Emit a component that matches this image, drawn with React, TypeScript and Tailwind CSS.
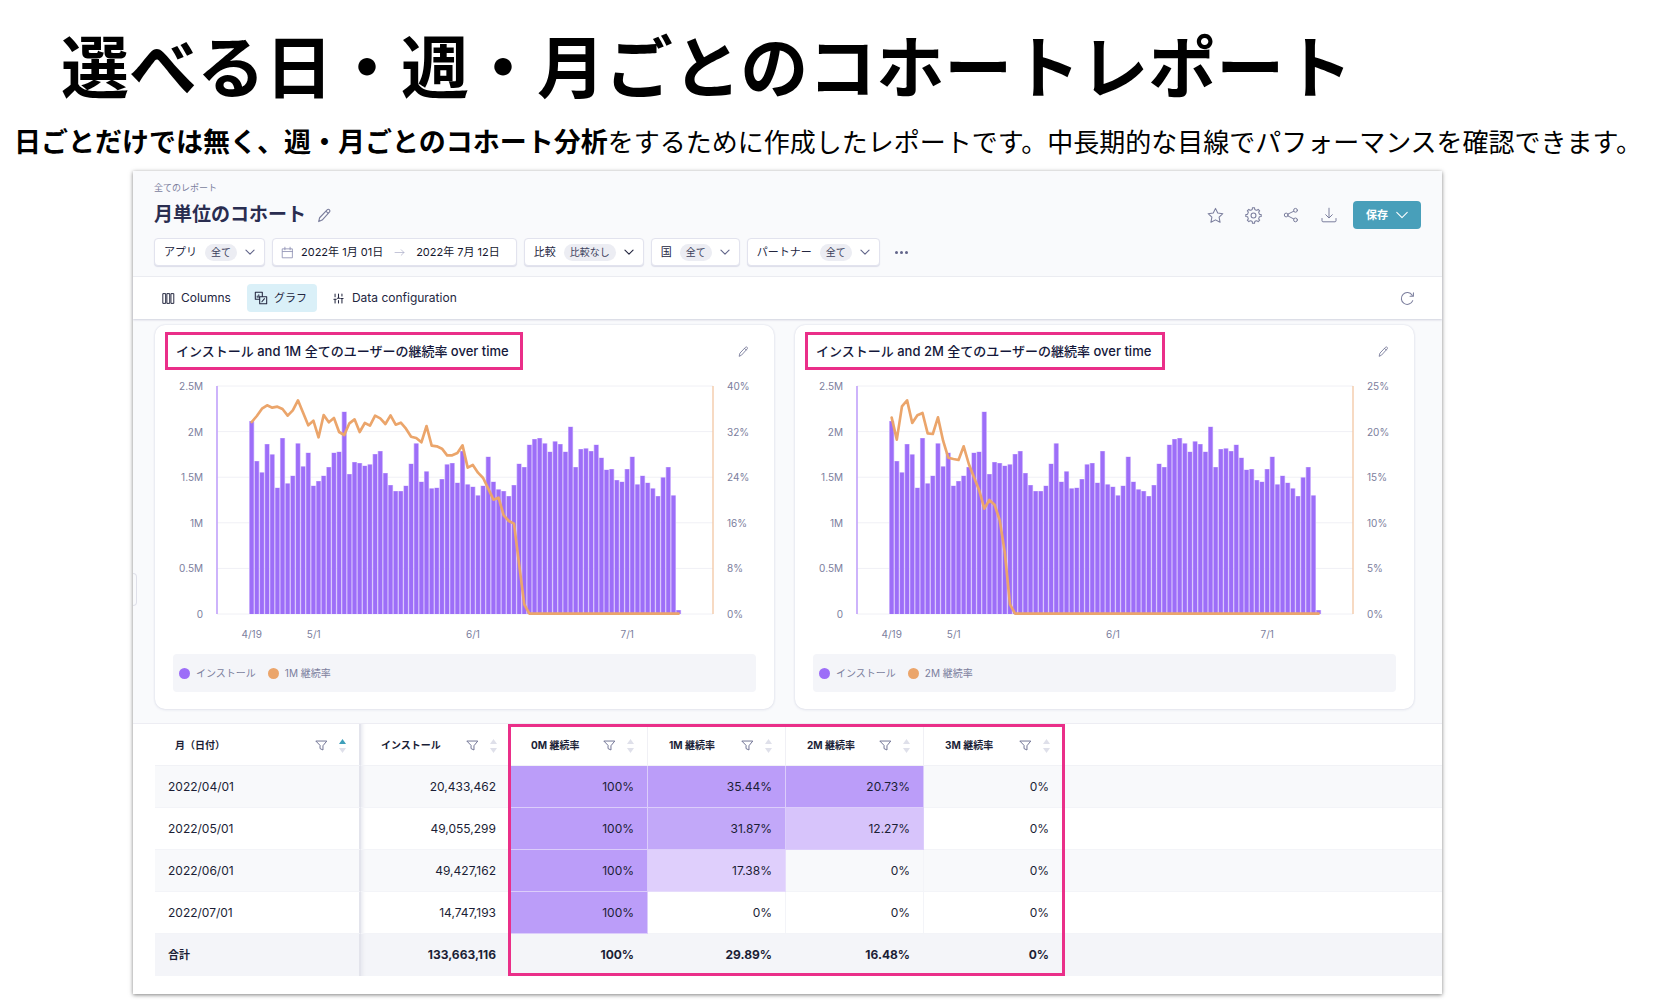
import type { ReactNode } from "react";

const PLOT_HEIGHT = 684;

const barTops = [
  306, 426, 460, 375, 406, 506, 357, 493, 470, 373, 442, 401, 500, 486, 470, 444, 401, 398, 278, 465, 429,
  432, 440, 436, 405, 396, 462, 498, 516, 516, 500, 434, 373, 488, 457, 508, 506, 480, 436, 432, 491, 396,
  496, 503, 529, 500, 413, 488, 511, 516, 531, 498, 434, 444, 377, 360, 357, 373, 398, 367, 375, 398, 323,
  444, 390, 388, 396, 377, 416, 452, 450, 483, 488, 450, 413, 496, 470, 491, 508, 531, 475, 444, 529, 873,
].map((y) => y - 200);

const firstMonthLine = [
  308, 290, 268, 258, 265, 262, 269, 289, 273, 243, 280, 318, 304, 354, 287, 309, 296, 338, 347, 312, 300,
  338, 311, 319, 289, 297, 314, 288, 316, 310, 328, 352, 356, 369, 320, 379, 381, 388, 408, 408, 401, 378,
  445, 437, 460, 476, 508, 541, 535, 588, 605, 613, 735, 855,
].map((y) => y - 200);

const secondMonthLine = [
  295, 361, 261, 243, 311, 288, 281, 342, 344, 294, 364, 415, 419, 422, 381, 434, 474, 512, 568, 542, 556,
  602, 700, 855,
].map((y) => y - 200);

const barX = (i: number) => 104 + i * 15.43;

function Svg({ size, children, className = "" }: { size: number; children: ReactNode; className?: string }) {
  return (
    <svg
      width={size}
      height={size}
      viewBox="0 0 16 16"
      fill="none"
      stroke="currentColor"
      strokeWidth="1"
      strokeLinecap="round"
      strokeLinejoin="round"
      aria-hidden="true"
      className={`shrink-0 ${className}`}
    >
      {children}
    </svg>
  );
}

const Chevron = ({ className = "" }: { className?: string }) => (
  <Svg size={10} className={className}>
    <path d="M1.5 5 8 11.5 14.5 5" strokeWidth="1.8" />
  </Svg>
);

const Pencil = ({ size }: { size: number }) => (
  <Svg size={size}>
    <path d="M1.8 14.5 2.8 10.4 10.8 2c.8-.8 1.800-.8 2.500-.1s.7 1.700-.1 2.500L5.500 12.900zM9.500 3.400 11.900 5.800" strokeWidth="1.200" />
  </Svg>
);

const Star = () => (
  <Svg size={17}>
    <path d="M8 1.300 10.100 5.700 14.900 6.300 11.400 9.600 12.300 14.400 8 12.100 3.700 14.400 4.600 9.600 1.100 6.300 5.900 5.700z" />
  </Svg>
);

const gearPath = (() => {
  let d = "";
  for (let i = 0; i < 8; i++) {
    const at = (deg: number, r: number) => {
      const a = ((i * 45 + deg - 90) * Math.PI) / 180;
      return `${(8 + r * Math.cos(a)).toFixed(2)} ${(8 + r * Math.sin(a)).toFixed(2)}`;
    };
    d += `${i === 0 ? "M" : "L"}${at(-8, 7.3)} L${at(8, 7.3)} Q${at(10, 5.2)} ${at(22.5, 5.7)} Q${at(35, 5.2)} ${at(37, 7.3)} `;
  }
  return d + "Z";
})();

const Gear = () => (
  <Svg size={17}>
    <path d={gearPath} />
    <circle cx="8" cy="8" r="2.300" />
  </Svg>
);

const Share = () => (
  <Svg size={16}>
    <circle cx="3.200" cy="8" r="1.900" />
    <circle cx="12.500" cy="3.300" r="1.900" />
    <circle cx="12.500" cy="12.900" r="1.900" />
    <path d="M4.900 7.100 10.800 4.200M4.900 8.900 10.800 12" />
  </Svg>
);

const Download = () => (
  <Svg size={16}>
    <path d="M8 1.200v9.500M4.700 7.700 8 11l3.300-3.300M1 11.500v2.300c0 .6.400 1 1 1h12c.6 0 1-.4 1-1v-2.300" />
  </Svg>
);

const Refresh = () => (
  <Svg size={15}>
    <path d="M13.600 10.300A6.300 6.300 0 1 1 13 4.500M14.300 2v3.600h-3.600" strokeWidth="1.100" />
  </Svg>
);

const Calendar = () => (
  <Svg size={13}>
    <path d="M2 3.500h12v11H2zM2 6.800h12M4.800 1.500v3.200M11.200 1.500v3.200" />
  </Svg>
);

const Arrow = () => (
  <Svg size={11}>
    <path d="M1.500 8h13M10.500 4l4 4-4 4" />
  </Svg>
);

const ColumnsIcon = () => (
  <Svg size={13}>
    <path d="M1.500 2h3v12h-3zM6.500 2h3v12h-3zM11.500 2h3v12h-3z" strokeWidth="1.200" />
  </Svg>
);

const GraphIcon = () => (
  <Svg size={14}>
    <path d="M6.500 9.500H1.500V1.500H9.500V6.500M6.500 6.500h8v8h-8zM3.700 7.200v-1.500M5.500 7.200v-3M9 12.300l3-3.500" strokeWidth="1.200" />
  </Svg>
);

const SlidersIcon = () => (
  <Svg size={11}>
    <path d="M3 1.500v4M3 9v5.500M8 1.500v6M8 11v3.500M13 1.500v3M13 8v6.500M1.300 9h3.400M6.300 7.500h3.400M11.300 8h3.400" strokeWidth="1.500" />
  </Svg>
);

const FunnelIcon = () => (
  <Svg size={13} className="text-[#6f7293]">
    <path d="M1.500 2.500h13L9.800 8.300v5.200l-3.600-1.700V8.300z" strokeWidth="1.200" />
  </Svg>
);

function SortIcon({ ascending = false }: { ascending?: boolean }) {
  return (
    <svg width="7" height="14" viewBox="0 0 7 14" className="shrink-0" aria-hidden="true">
      <path d="M3.500 0 7 5H0z" fill={ascending ? "#3f9fba" : "#dfe0ea"} />
      <path d="M3.500 14 7 9H0z" fill="#dfe0ea" />
    </svg>
  );
}

function Filter({ label, value, strong = false }: { label: string; value: string; strong?: boolean }) {
  return (
    <button
      type="button"
      className="flex h-7 items-center gap-2 rounded border border-[#e2e3ee] bg-white px-[9px] text-[11px] text-[#23263f] shadow-[0_1px_1px_#dcdde9]"
    >
      <span>{label}</span>
      <span className="flex h-[17px] items-center rounded-full bg-[#ecedf3] px-[6px] text-[10px] text-[#3c3f5c]">{value}</span>
      <Chevron className={strong ? "text-[#23263f]" : "text-[#62658a]"} />
    </button>
  );
}

function IconButton({ label, children }: { label: string; children: ReactNode }) {
  return (
    <button type="button" aria-label={label} className="flex w-[18px] justify-center text-[#7b7e9d]">
      {children}
    </button>
  );
}

type ChartProps = { month: string; percents: string[]; line: number[] };

const counts = ["2.5M", "2M", "1.5M", "1M", "0.5M", "0"];
const dates = [
  { label: "4/19", left: "7%" },
  { label: "5/1", left: "19.5%" },
  { label: "6/1", left: "51.6%" },
  { label: "7/1", left: "82.7%" },
];

function AxisLabels({ labels, className }: { labels: string[]; className: string }) {
  return (
    <div className={`flex h-60 flex-col justify-between text-[10px] leading-3 ${className}`}>
      {labels.map((t) => (
        <span key={t}>{t}</span>
      ))}
    </div>
  );
}

function ChartCard({ month, percents, line }: ChartProps) {
  const full = [...line, ...Array(barTops.length - line.length).fill(PLOT_HEIGHT - 1)];
  const points = full.map((y, i) => `${barX(i)},${y}`).join(" ");
  return (
    <article className="min-w-0 flex-1 rounded-[10px] bg-white pt-[7px] pb-[17px] shadow-[0_0_2px_#d5d7e3,0_1px_3px_#e9eaf1]">
      <header className="flex items-center justify-between pr-[25px] pl-[10px]">
        <h2 className="border-[3px] border-[#ea2f89] py-[6px] pr-[11px] pl-2 text-[13px] leading-5 font-medium text-[#14173a]">
          インストール and {month} 全てのユーザーの継続率 over time
        </h2>
        <button type="button" aria-label="グラフを編集" className="text-[#6f7293]">
          <Pencil size={11} />
        </button>
      </header>
      <div className="mt-[10px] flex text-[#7b7e9d]">
        <AxisLabels labels={counts} className="mr-[14px] w-12 items-end" />
        <div className="min-w-0 flex-1 pt-[6px]">
          <svg
            viewBox="0 0 1488 684"
            preserveAspectRatio="none"
            className="block h-[228px] w-full overflow-visible"
            role="img"
            aria-label={`インストールと${month}継続率`}
          >
            {[0, 1, 2, 3, 4, 5].map((i) => (
              <line key={i} x1="0" x2="1488" y1={i * 136.8} y2={i * 136.8} stroke="#f0f0f5" strokeWidth="3" />
            ))}
            {barTops.map((y, i) => (
              <rect key={i} x={barX(i) - 7.7} y={y - 1} width="15.4" height={PLOT_HEIGHT - y + 1} fill="#cfb7fc" />
            ))}
            {barTops.map((y, i) => (
              <rect key={i} x={barX(i) - 5.7} y={y} width="11.4" height={PLOT_HEIGHT - y} fill="#9d6ef8" />
            ))}
            <line x1="0" x2="0" y1="0" y2="684" stroke="#c3a5fb" strokeWidth="5" />
            <line x1="1488" x2="1488" y1="0" y2="684" stroke="#f3c8a5" strokeWidth="4" />
            <polyline points={points} fill="none" stroke="#eba56b" strokeWidth="8" strokeLinejoin="round" strokeLinecap="round" />
          </svg>
          <div className="relative mt-[14px] h-3 text-[10px] leading-3">
            {dates.map((d) => (
              <span key={d.label} className="absolute -translate-x-1/2" style={{ left: d.left }}>
                {d.label}
              </span>
            ))}
          </div>
        </div>
        <AxisLabels labels={percents} className="ml-[14px] w-[47px] items-start" />
      </div>
      <div className="mx-[18px] mt-[14px] flex h-[38px] items-center rounded bg-[#f4f5f9] px-[6px] text-[10px] text-[#7b7e9d]">
        <span className="mr-[6px] size-[11px] rounded-full bg-[#9d6ef8]" />
        インストール
        <span className="mr-[6px] ml-3 size-[11px] rounded-full bg-[#eba56b]" />
        {month} 継続率
      </div>
    </article>
  );
}

const headers = ["月（日付）", "インストール", "0M 継続率", "1M 継続率", "2M 継続率", "3M 継続率"];

const headerStyles = [
  "border-r-2 border-r-[#e3e4ec] pl-5",
  "pl-5 shadow-[inset_5px_0_4px_-4px_#e3e4ec]",
  "border-r border-r-[#f0f0f5] pl-[21px]",
  "border-r border-r-[#f0f0f5] pl-[21px]",
  "border-r border-r-[#f0f0f5] pl-[21px]",
  "pl-[21px]",
];

const rows = [
  { date: "2022/04/01", cells: ["20,433,462", "100%", "35.44%", "20.73%", "0%"] },
  { date: "2022/05/01", cells: ["49,055,299", "100%", "31.87%", "12.27%", "0%"] },
  { date: "2022/06/01", cells: ["49,427,162", "100%", "17.38%", "0%", "0%"] },
  { date: "2022/07/01", cells: ["14,747,193", "100%", "0%", "0%", "0%"] },
];

const heat: Record<string, string> = {
  "100%": "bg-[#bb9df9] border-[#dccdfb]",
  "35.44%": "bg-[#bb9df9] border-[#dccdfb]",
  "20.73%": "bg-[#bb9df9] border-[#dccdfb]",
  "31.87%": "bg-[#c2a8f9] border-[#dccdfb]",
  "12.27%": "bg-[#d7c4fb] border-[#dccdfb]",
  "17.38%": "bg-[#dfcffc] border-[#e6dbfc]",
};

function CohortTable() {
  return (
    <section className="border-t border-[#ededf3] bg-white pb-[18px] pl-[22px]">
      <div className="relative">
        <table className="w-full table-fixed border-separate border-spacing-0 text-[12px] text-[#1b1e36]">
          <colgroup>
            <col className="w-[206px]" />
            <col className="w-[149px]" />
            <col className="w-[138px]" />
            <col className="w-[138px]" />
            <col className="w-[138px]" />
            <col className="w-[139px]" />
            <col />
          </colgroup>
          <thead>
            <tr className="h-[42px]">
              {headers.map((h, i) => (
                <th key={h} scope="col" className={`border-b border-b-[#f1f2f6] p-0 pt-[2px] text-[10px] font-bold ${headerStyles[i]}`}>
                  <span className="flex items-center pr-[13px]">
                    <span className="mr-auto">{h}</span>
                    <button type="button" aria-label={`${h}を絞り込む`} className="mr-[11px]">
                      <FunnelIcon />
                    </button>
                    <button type="button" aria-label={`${h}で並べ替え`}>
                      <SortIcon ascending={i === 0} />
                    </button>
                  </span>
                </th>
              ))}
              <td className="border-b border-b-[#f1f2f6]" />
            </tr>
          </thead>
          <tbody>
            {rows.map((r) => (
              <tr key={r.date} className="h-[42px] odd:bg-[#f8f9fb]">
                <th scope="row" className="border-r-2 border-b border-r-[#e3e4ec] border-b-[#f3f4f8] p-0 pl-[13px] text-left font-normal">
                  {r.date}
                </th>
                {r.cells.map((c, i) => (
                  <td
                    key={i}
                    className={`border-b p-0 text-right ${heat[c] ?? "border-[#f3f4f8]"} ${
                      i === 0 ? "pr-[14px] shadow-[inset_5px_0_4px_-4px_#e3e4ec]" : i < 4 ? "border-r pr-[13px]" : "pr-[14px]"
                    }`}
                  >
                    {c}
                  </td>
                ))}
                <td className="border-b border-[#f3f4f8]" />
              </tr>
            ))}
          </tbody>
          <tfoot>
            <tr className="h-[42px] bg-[#f4f5f9] font-bold">
              <th scope="row" className="border-r-2 border-r-[#e3e4ec] p-0 pl-[13px] text-left text-[11px]">
                合計
              </th>
              {["133,663,116", "100%", "29.89%", "16.48%", "0%"].map((c, i) => (
                <td key={i} className={`p-0 pr-[14px] text-right ${i === 0 ? "shadow-[inset_5px_0_4px_-4px_#e3e4ec]" : ""}`}>
                  {c}
                </td>
              ))}
              <td />
            </tr>
          </tfoot>
        </table>
        <div className="pointer-events-none absolute inset-y-0 left-[353px] w-[557px] border-[3px] border-[#ea2f89]" />
      </div>
    </section>
  );
}

export default function App() {
  return (
    <main className="min-h-screen overflow-hidden bg-white pb-[5px] font-['Inter','Noto_Sans_CJK_JP',sans-serif] text-black">
      <h1 className="mt-3 ml-[61px] font-['Noto_Sans_CJK_JP',sans-serif] text-[68px] leading-[104px] font-bold whitespace-nowrap">
        選べる日・週・月ごとのコホートレポート
      </h1>
      <p className="mt-1 ml-[14px] font-['Noto_Sans_CJK_JP',sans-serif] text-[26px] leading-[42px] whitespace-nowrap">
        <strong className="text-[27px] font-bold">日ごとだけでは無く、週・月ごとのコホート分析</strong>
        をするために作成したレポートです。中長期的な目線でパフォーマンスを確認できます。
      </p>

      <div className="relative mt-[9px] mr-[218px] ml-[133px] bg-[#f9fafc] shadow-[0_1px_4px_rgba(0,0,0,0.5)]">
        <header className="border-b border-[#edeef3] px-[21px] pt-[9px] pb-[10px]">
          <a href="#reports" className="block text-[9px] leading-4 text-[#7b7e9d]">
            全てのレポート
          </a>
          <div className="mt-[3px] flex items-center">
            <h2 className="text-[19px] leading-8 font-bold text-[#2a2d50]">月単位のコホート</h2>
            <button type="button" aria-label="名前を編集" className="ml-[11px] text-[#7b7e9d]">
              <Pencil size={15} />
            </button>
            <div className="ml-auto flex items-center gap-5">
              <IconButton label="お気に入り"><Star /></IconButton>
              <IconButton label="設定"><Gear /></IconButton>
              <IconButton label="共有"><Share /></IconButton>
              <IconButton label="ダウンロード"><Download /></IconButton>
            </div>
            <button type="button" className="ml-[15px] flex h-7 w-[68px] items-center justify-center gap-2 rounded bg-[#489fba] text-[11px] font-bold text-white">
              保存
              <Svg size={12}>
                <path d="M1 4.500 8 11.500 15 4.500" strokeWidth="1.400" />
              </Svg>
            </button>
          </div>
          <div className="mt-[7px] flex items-center gap-[7px]">
            <Filter label="アプリ" value="全て" />
            <button
              type="button"
              className="flex h-7 items-center rounded border border-[#e2e3ee] bg-white pr-4 pl-2 text-[11px] text-[#14172e] shadow-[0_1px_1px_#dcdde9]"
            >
              <span className="mr-[7px] text-[#8a8db0]"><Calendar /></span>
              2022年 1月 01日
              <span className="mx-[11px] text-[#a9abc6]"><Arrow /></span>
              2022年 7月 12日
            </button>
            <Filter label="比較" value="比較なし" strong />
            <Filter label="国" value="全て" />
            <Filter label="パートナー" value="全て" />
            <button type="button" aria-label="その他のフィルター" className="ml-2 flex gap-[2px]">
              <span className="size-[3px] rounded-full bg-[#62658a]" />
              <span className="size-[3px] rounded-full bg-[#62658a]" />
              <span className="size-[3px] rounded-full bg-[#62658a]" />
            </button>
          </div>
        </header>

        <nav className="flex h-[42px] items-center bg-white pr-[27px] pl-[22px] text-[12px] text-[#23263f] shadow-[0_1px_2px_#cfd1de]">
          <button type="button" className="flex h-7 items-center gap-[6px] px-[7px]">
            <ColumnsIcon />
            Columns
          </button>
          <button type="button" className="ml-[9px] flex h-7 items-center gap-[6px] rounded bg-[#daf0f8] pr-[10px] pl-[7px] text-[11px]">
            <GraphIcon />
            グラフ
          </button>
          <button type="button" className="ml-[9px] flex h-7 items-center gap-2 px-[7px]">
            <SlidersIcon />
            Data configuration
          </button>
          <button type="button" aria-label="更新" className="ml-auto text-[#7b7e9d]">
            <Refresh />
          </button>
        </nav>

        <div className="flex gap-[21px] pt-[6px] pr-7 pb-[14px] pl-[22px]">
          <ChartCard month="1M" percents={["40%", "32%", "24%", "16%", "8%", "0%"]} line={firstMonthLine} />
          <ChartCard month="2M" percents={["25%", "20%", "15%", "10%", "5%", "0%"]} line={secondMonthLine} />
        </div>
        <button
          type="button"
          aria-label="メニューを開く"
          className="absolute top-[402px] left-0 h-[33px] w-1 rounded-r border border-l-0 border-[#dfe0e9] bg-[#f9fafc]"
        />

        <CohortTable />
      </div>
    </main>
  );
}
